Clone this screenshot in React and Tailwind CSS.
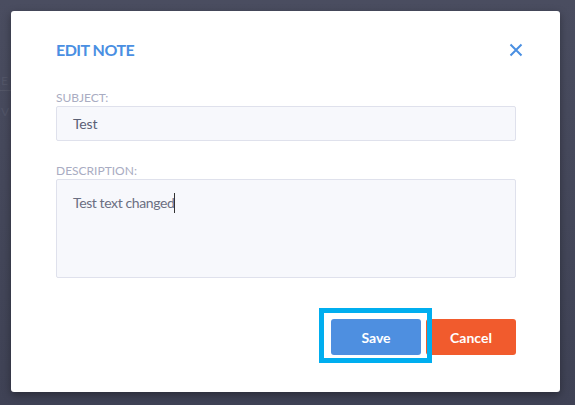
export default function App() {
  return (
    <div className="relative w-[575px] h-[405px] overflow-hidden bg-linear-to-b from-[#4a4d60] to-[#3f4255]" style={{ fontFamily: "Lato, 'Open Sans', sans-serif" }}>
      {/* faint page content behind the overlay */}
      <div className="flex flex-col pt-[72px]">
        <div className="ml-[1px] text-[12px] leading-[18px] text-[#525568]">E</div>
        <div className="h-px w-[20px] bg-[#535667]"></div>
        <div className="ml-[1px] mt-[12px] text-[12px] leading-[18px] text-[#525568]">V</div>
      </div>

      {/* modal overlay */}
      <div className="absolute left-[11px] top-[11px] w-[549px] h-[381px] rounded-[3px] bg-white shadow-[0_3px_8px_rgba(0,0,0,0.35)] pl-[45px] pr-[44px] pt-[29px] flex flex-col">
        <div className="flex items-center justify-between h-[20px]">
          <div className="text-[16px] leading-[20px] font-bold tracking-[-0.5px] text-[#4a8fe2]">EDIT NOTE</div>
          <svg width="14" height="14" viewBox="0 0 14 14" className="mr-[-7px]">
            <path d="M1.5 1.5 L12.5 12.5 M12.5 1.5 L1.5 12.5" stroke="#4a8fe2" strokeWidth="2" fill="none" />
          </svg>
        </div>

        <div className="mt-[30px] text-[12px] leading-[16px] text-[#a9acc2]">SUBJECT:</div>
        <div className="h-[35px] border border-[#dfe1ec] rounded-[2px] bg-[#f7f8fc] pl-[16px] flex items-center text-[14px] tracking-[-0.2px] text-[#5b6075]">
          Test
        </div>

        <div className="mt-[22px] text-[12px] leading-[16px] text-[#a9acc2]">DESCRIPTION:</div>
        <div className="h-[99px] border border-[#dfe1ec] rounded-[2px] bg-[#f7f8fc] pl-[16px] pt-[13px] text-[14px] leading-[20px] tracking-[-0.4px] text-[#6b6f82]">
          <span>Test text changed</span>
          <span className="inline-block align-top w-px h-[20px] bg-[#333]"></span>
        </div>

        <div className="mt-[41px] flex justify-end gap-[5px]">
          <div className="relative">
            <button className="w-[90px] h-[36px] rounded-[3px] bg-[#4e8fe0] text-white text-[14px] font-bold">Save</button>
            <div className="absolute left-[-12px] top-[-11px] w-[113px] h-[55px] border-[5px] border-[#00aeef] pointer-events-none z-10"></div>
          </div>
          <button className="w-[90px] h-[36px] rounded-[3px] bg-[#f15b2d] text-white text-[14px] font-bold">Cancel</button>
        </div>
      </div>
    </div>
  );
}
